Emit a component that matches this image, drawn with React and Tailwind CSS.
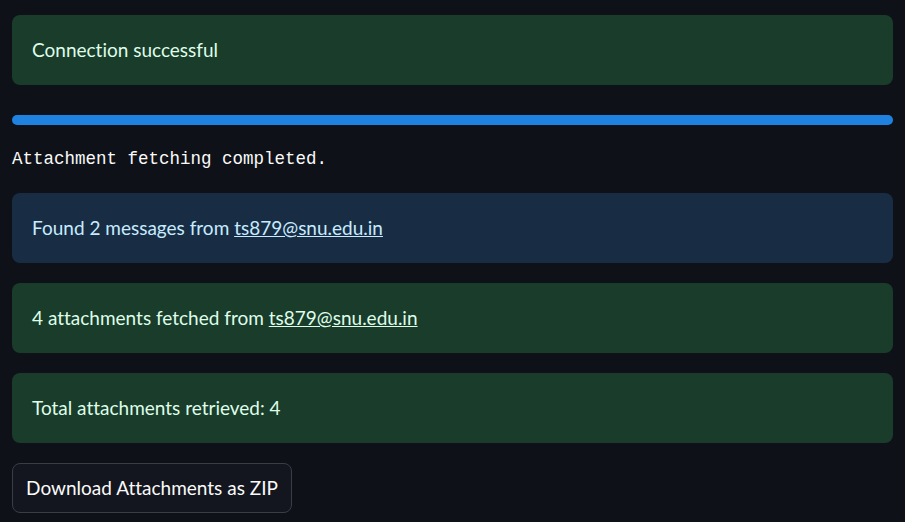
export default function App() {
  return (
    <div className="min-h-screen w-full bg-[#0e1117] px-3 pt-[15px] [font-variant-ligatures:none]" style={{ fontFamily: 'Lato, "Noto Sans", sans-serif' }}>
      <div className="flex flex-col">
        <div className="flex h-[70px] items-center rounded-lg bg-[#1a3c2a] px-5 text-[19px] text-[#dffde9]">
          Connection successful
        </div>

        <div className="mt-[30px] h-[10px] w-full rounded-full bg-[#1f82e1]" />

        <pre className="mt-[22px] text-[17.5px] leading-[24px] text-[#fafafa]" style={{ fontFamily: '"Liberation Mono", monospace' }}>
          Attachment fetching completed.
        </pre>

        <div className="mt-[22px] flex h-[70px] items-center rounded-lg bg-[#182d44] px-5 text-[19px] text-[#c7ebff]">
          <span>
            Found 2 messages from <a className="underline" href="#">ts879@snu.edu.in</a>
          </span>
        </div>

        <div className="mt-5 flex h-[70px] items-center rounded-lg bg-[#1a3c2a] px-5 text-[19px] text-[#dffde9]">
          <span>
            4 attachments fetched from <a className="underline" href="#">ts879@snu.edu.in</a>
          </span>
        </div>

        <div className="mt-5 flex h-[70px] items-center rounded-lg bg-[#1a3c2a] px-5 text-[19px] text-[#dffde9]">
          Total attachments retrieved: 4
        </div>

        <div className="mt-5">
          <button
            type="button"
            className="h-[50px] w-[280px] rounded-lg border border-[#3a3d45] bg-[#13161e] text-[19px] text-[#fafafa]"
          >
            Download Attachments as ZIP
          </button>
        </div>
      </div>
    </div>
  )
}
